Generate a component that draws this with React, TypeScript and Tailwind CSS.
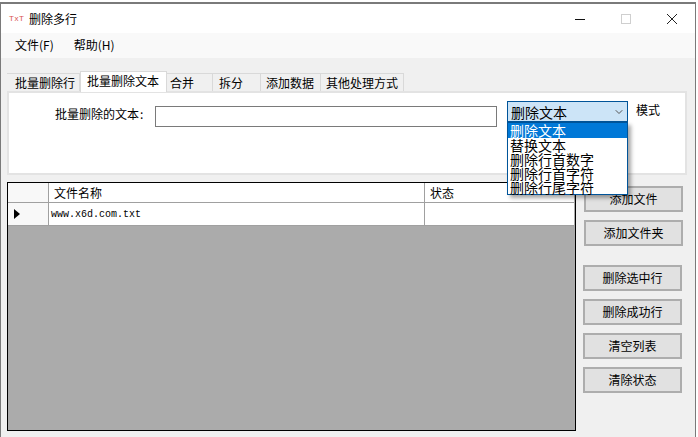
import React from 'react';
import { ChevronDown } from 'lucide-react';

const tabs = [
  { label: '批量删除行', w: 'w-[73px] pl-[8px]' },
  { label: '批量删除文本', w: 'w-[87px] pl-[6px]', active: true },
  { label: '合并', w: 'w-[46px] pl-[3px]' },
  { label: '拆分', w: 'w-[48px] pl-[6px]' },
  { label: '添加数据', w: 'w-[60px] pl-[5px]' },
  { label: '其他处理方式', w: 'w-[83px] pl-[5px]' },
];

const comboItems = ['删除文本', '替换文本', '删除行首数字', '删除行首字符', '删除行尾字符'];

const Btn = ({ label, className }: { label: string; className: string }) => (
  <button className={`w-[99px] h-[26px] bg-[#e1e1e1] border-2 border-[#adadad] text-[12px] text-black flex items-center justify-center ${className}`}>
    {label}
  </button>
);

export default function App() {
  return (
    <div className="w-[698px] h-[437px] bg-white overflow-hidden relative text-black font-['Noto_Sans_CJK_SC','Noto_Sans',sans-serif]">
      <div className="h-[2px]" />
      <div className="w-[696px] h-[435px] border-t-2 border-x border-[#7a7a7a] flex flex-col bg-[#f0f0f0]">
        {/* title bar */}
        <div className="h-[29px] bg-white flex items-center shrink-0">
          <span className="ml-[8px] w-[18px] text-[8px] tracking-[0.5px] leading-none text-[#d9534f] font-['Liberation_Sans',sans-serif]">TxT</span>
          <span className="ml-[2px] text-[12px] leading-none">删除多行</span>
          <div className="ml-auto flex items-center h-full">
            <svg width="12" height="12" viewBox="0 0 12 12" className="mr-[34px]"><path d="M1 6.5h10" stroke="#111" strokeWidth="1" /></svg>
            <svg width="12" height="12" viewBox="0 0 12 12" className="mr-[34px]"><rect x="1.5" y="1.5" width="9" height="9" fill="none" stroke="#cfcfcf" /></svg>
            <svg width="12" height="12" viewBox="0 0 12 12" className="mr-[17px]"><path d="M1 1l10 10M11 1L1 11" stroke="#222" strokeWidth="1" /></svg>
          </div>
        </div>
        {/* menu */}
        <div className="h-[25px] bg-[#f9f9f9] flex items-center pl-[14px] pb-[1px] gap-[20px] text-[12px] shrink-0">
          <span>文件(F)</span>
          <span>帮助(H)</span>
        </div>
        {/* tabs */}
        <div className="h-[33px] flex items-end pl-[6px] shrink-0">
          {tabs.map((t) => (
            <div
              key={t.label}
              className={`${t.w} flex items-center text-[12px] leading-none border-[#d9d9d9] ${
                t.active ? 'h-[21px] bg-white border-x border-t relative z-10 pb-[3px] -mb-px' : 'h-[18px] bg-[#f0f0f0] border-r border-t'
              }`}
            >
              {t.label}
            </div>
          ))}
        </div>
        {/* tab page */}
        <div className="ml-[6px] w-[680px] h-[84px] bg-white border-2 border-[#e3e3e3] flex items-start shrink-0">
          <span className="ml-[46px] mt-[15px] w-[100px] text-[12px] leading-none">批量删除的文本<span className="ml-[1px]">:</span></span>
          <div className="mt-[13px] w-[342px] h-[21px] bg-white border border-[#7a7a7a]" />
          <div className="ml-[10px] mt-[8px] w-[121px] h-[21px] bg-[#cce4f7] border border-[#005499] flex items-center pl-[3px] text-[14px] leading-none">
            删除文本
            <ChevronDown size={12} className="ml-auto mr-[2px] text-[#555]" />
          </div>
          <span className="ml-[8px] mt-[11px] text-[12px] leading-none">模式</span>
        </div>
        {/* lower area */}
        <div className="flex mt-[7px] ml-[6px]">
          <div className="w-[569px] h-[249px] border border-black bg-[#ababab] flex flex-col shrink-0">
            <div className="h-[20px] w-[566px] flex bg-white border-b border-[#a0a0a0] text-[12px] leading-none shrink-0">
              <div className="w-[41px] border-r border-[#a0a0a0] bg-[#f8f8f8]" />
              <div className="w-[376px] border-r border-[#a0a0a0] pl-[5px] flex items-center">文件名称</div>
              <div className="flex-1 pl-[5px] flex items-center">状态</div>
            </div>
            <div className="h-[23px] w-[566px] flex bg-white border-b border-[#a0a0a0] shrink-0">
              <div className="w-[41px] border-r border-[#a0a0a0] bg-[#f8f8f8] flex items-center pl-[6px]">
                <svg width="6" height="10" viewBox="0 0 6 10"><path d="M0 0l6 5-6 5z" fill="#000" /></svg>
              </div>
              <div className="w-[376px] border-r border-[#a0a0a0] pl-[2px] pt-[1px] flex items-center text-[10px] leading-none font-['Liberation_Mono',monospace]">www.x6d.com.txt</div>
              <div className="flex-1" />
            </div>
          </div>
          <div className="flex flex-col ml-[7px] w-[100px]">
            <Btn label="添加文件" className="mt-[4px] ml-px" />
            <Btn label="添加文件夹" className="mt-[8px] ml-px" />
            <Btn label="删除选中行" className="mt-[19px]" />
            <Btn label="删除成功行" className="mt-[8px]" />
            <Btn label="清空列表" className="mt-[8px]" />
            <Btn label="清除状态" className="mt-[8px]" />
          </div>
        </div>
      </div>
      {/* open combo list */}
      <div className="absolute left-[507px] top-[122px] w-[121px] h-[73px] bg-white border border-[#005499] shadow-[3px_3px_4px_rgba(0,0,0,0.35)] text-[14px] leading-[14px] z-20">
        {comboItems.map((item, i) => (
          <div key={item} className={`pl-[2px] ${i === 0 ? 'h-[15px] bg-[#0078d7] text-white' : 'h-[14px]'}`}>
            {item}
          </div>
        ))}
      </div>
    </div>
  );
}
